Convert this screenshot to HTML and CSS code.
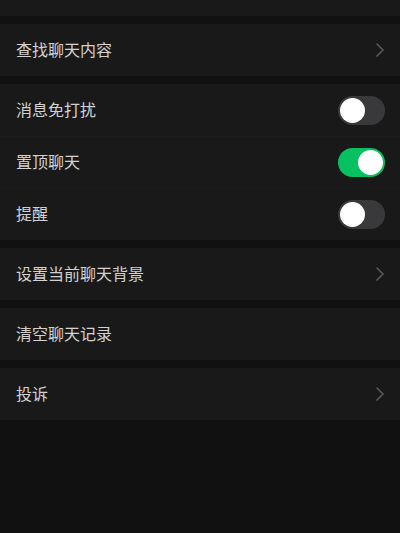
FILE: index.html
```html
<!DOCTYPE html>
<html lang="zh">
<head>
<meta charset="utf-8">
<link rel="stylesheet" href="styles.css">
</head>
<body>
<div class="page">
  <div class="group top"></div>
  <div class="group">
    <div class="row"><span class="label">查找聊天内容</span><svg class="chev" viewBox="0 0 8 14"><path d="M1 1 L7 7 L1 13" /></svg></div>
  </div>
  <div class="group">
    <div class="row"><span class="label">消息免打扰</span><span class="switch"><span class="knob"></span></span></div>
    <div class="row line"><span class="label">置顶聊天</span><span class="switch on"><span class="knob"></span></span></div>
    <div class="row line"><span class="label">提醒</span><span class="switch"><span class="knob"></span></span></div>
  </div>
  <div class="group">
    <div class="row"><span class="label">设置当前聊天背景</span><svg class="chev" viewBox="0 0 8 14"><path d="M1 1 L7 7 L1 13" /></svg></div>
  </div>
  <div class="group">
    <div class="row"><span class="label">清空聊天记录</span></div>
  </div>
  <div class="group">
    <div class="row"><span class="label">投诉</span><svg class="chev" viewBox="0 0 8 14"><path d="M1 1 L7 7 L1 13" /></svg></div>
  </div>
</div>
</body>
</html>
```

FILE: styles.css
```css
html, body {
  margin: 0;
  padding: 0;
  background: #111111;
}
body {
  width: 400px;
  height: 533px;
  overflow: hidden;
  font-family: "Noto Sans CJK SC", "Noto Sans", sans-serif;
}
.page {
  display: flex;
  flex-direction: column;
  gap: 8px;
}
.group {
  background: #191919;
}
.group.top {
  height: 16px;
}
.row {
  height: 52px;
  display: flex;
  align-items: center;
  justify-content: space-between;
  padding: 0 15px 0 16px;
  box-sizing: border-box;
}
.row.line {
  box-shadow: inset 0 1px 0 #1c1c1c;
}
.label {
  color: #d2d2d2;
  font-size: 16px;
  line-height: 22px;
  margin-bottom: 2px;
}
.chev {
  width: 8px;
  height: 14px;
  margin-right: 1px;
}
.chev path {
  fill: none;
  stroke: #5c5c5c;
  stroke-width: 1.5;
  stroke-linecap: round;
  stroke-linejoin: round;
}
.switch {
  width: 47px;
  height: 29px;
  border-radius: 15px;
  background: #39393b;
  display: flex;
  align-items: center;
  padding: 0 2px;
  box-sizing: border-box;
}
.switch.on {
  background: #07c160;
  justify-content: flex-end;
}
.knob {
  width: 25px;
  height: 25px;
  border-radius: 50%;
  background: #ffffff;
}
```
